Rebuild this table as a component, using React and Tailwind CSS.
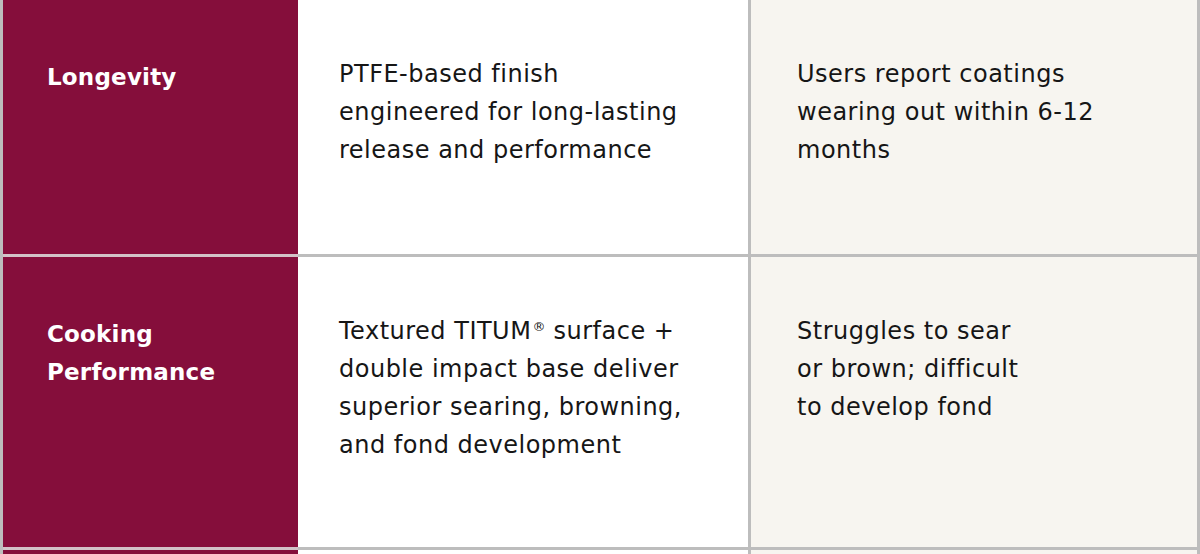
export default function App() {
  const rows = [
    {
      h: "h-[257px]",
      title: ["Longevity"],
      ours: ["PTFE-based finish", "engineered for long-lasting", "release and performance"],
      theirs: ["Users report coatings", "wearing out within 6-12", "months"],
    },
    {
      h: "h-[293px]",
      title: ["Cooking", "Performance"],
      ours: [
        <>
          Textured TITUM
          <span className="inline-block align-top text-[13px] leading-[13px] mt-[8px] ml-[1px] tracking-normal">®</span>{" "}
          surface +
        </>,
        "double impact base deliver",
        "superior searing, browning,",
        "and fond development",
      ],
      theirs: ["Struggles to sear", "or brown; difficult", "to develop fond"],
    },
    { h: "h-[60px]", title: [], ours: [], theirs: [] },
  ];

  return (
    <div className="w-[1200px] h-[554px] overflow-hidden bg-white font-['DejaVu_Sans',sans-serif]">
      <div className="border-l-[3px] border-r-[3px] border-[#bdbdbd]">
        {rows.map((r, i) => (
          <div key={i} className={`grid grid-cols-[295px_453px_1fr] ${r.h}`}>
            <div className="bg-[#850e3b] border-b-[3px] border-[#d2c2c7] pl-[44px] pt-[58px] text-white font-bold text-[23px] tracking-[0.2px] leading-[38px] whitespace-nowrap">
              {r.title.map((t, j) => (
                <div key={j}>{t}</div>
              ))}
            </div>
            <div className="bg-white border-b-[3px] border-r-[3px] border-[#bdbdbd] pl-[41px] pt-[55px] text-[#161616] text-[24px] tracking-[0.5px] leading-[38px] whitespace-nowrap">
              {r.ours.map((t, j) => (
                <div key={j}>{t}</div>
              ))}
            </div>
            <div className="bg-[#f7f5f0] border-b-[3px] border-[#bdbdbd] pl-[46px] pt-[55px] text-[#161616] text-[24px] tracking-[0.5px] leading-[38px] whitespace-nowrap">
              {r.theirs.map((t, j) => (
                <div key={j}>{t}</div>
              ))}
            </div>
          </div>
        ))}
      </div>
    </div>
  );
}
